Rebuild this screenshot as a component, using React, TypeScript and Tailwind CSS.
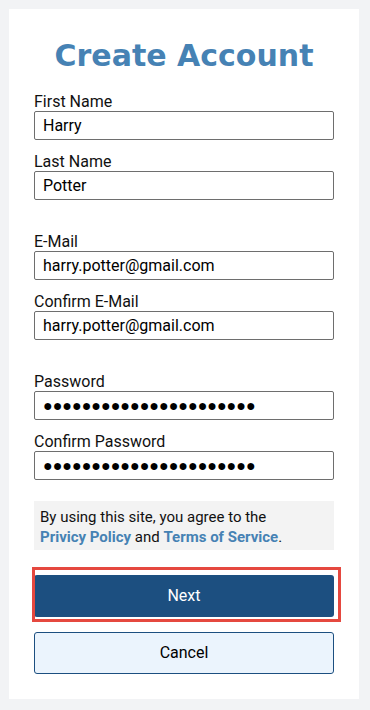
function Field({ label, value, dots = false }: { label: string; value: string; dots?: boolean }) {
  return (
    <div className="flex flex-col">
      <label className="text-[16px] leading-[18px] text-[#111]">{label}</label>
      <input
        readOnly
        type="text"
        value={value}
        className={
          dots
            ? "h-[29px] w-full rounded-[2px] border border-[#6e6e6e] bg-white px-[8px] font-['Liberation_Sans',sans-serif] text-[16px] text-black outline-none"
            : "h-[29px] w-full rounded-[2px] border border-[#6e6e6e] bg-white px-[8px] text-[16px] text-black outline-none"
        }
      />
    </div>
  );
}

function FieldGroup({ children }: { children: React.ReactNode }) {
  return <div className="flex flex-col gap-[13px]">{children}</div>;
}

export default function App() {
  const pw = "●".repeat(22);
  return (
    <div className="min-h-[710px] w-[370px] bg-[#f2f3f5] pt-[9px] pl-[9px] font-['Roboto',sans-serif]">
      <div className="flex w-[350px] flex-col bg-white px-[25px] pt-[29px] pb-[25px]">
        <h1 className="text-center font-['DejaVu_Sans',Verdana,sans-serif] text-[30px] font-bold leading-[36px] text-[#4682b4]">
          Create Account
        </h1>

        <div className="mt-[19px] flex flex-col gap-[33px]">
          <FieldGroup>
            <Field label="First Name" value="Harry" />
            <Field label="Last Name" value="Potter" />
          </FieldGroup>
          <FieldGroup>
            <Field label="E-Mail" value="harry.potter@gmail.com" />
            <Field label="Confirm E-Mail" value="harry.potter@gmail.com" />
          </FieldGroup>
          <FieldGroup>
            <Field label="Password" value={pw} dots />
            <Field label="Confirm Password" value={pw} dots />
          </FieldGroup>
        </div>

        <div className="mt-[21px] bg-[#f3f3f3] px-[6px] pt-[6px] pb-[3px] text-[15px] leading-[20px] text-[#111]">
          By using this site, you agree to the
          <br />
          <a className="font-bold text-[#4682b4]">Privicy Policy</a> and{" "}
          <a className="font-bold text-[#4682b4]">Terms of Service</a>.
        </div>

        <div className="relative mt-[25px]">
          <button className="flex h-[42px] w-full items-center justify-center rounded-[3px] bg-[#1c4f80] text-[16px] font-normal text-white">
            Next
          </button>
          <div className="pointer-events-none absolute -top-[8px] -left-[2px] -right-[7px] -bottom-[5px] border-[3px] border-[#e5483f]" />
        </div>

        <button className="mt-[15px] flex h-[42px] w-full items-center justify-center rounded-[3px] border border-[#1c4f80] bg-[#ebf4fd] text-[16px] text-black">
          Cancel
        </button>
      </div>
    </div>
  );
}
